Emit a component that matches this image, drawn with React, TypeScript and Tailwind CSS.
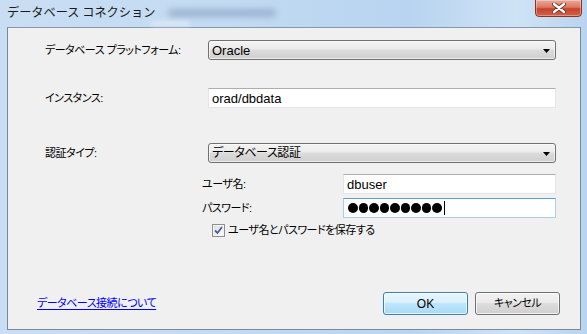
import React from "react";

const jp = "[font-family:'Liberation_Sans','Noto_Sans_CJK_JP',sans-serif] [font-feature-settings:'palt']";

function Combo({ children }: { children: React.ReactNode }) {
  return (
    <div className="relative flex h-[20px] w-[348px] items-center rounded-[3px] border border-[#707070] bg-[linear-gradient(180deg,#f3f3f3_0%,#ebebeb_45%,#dcdcdc_50%,#cfcfcf_100%)] pl-[3px] shadow-[inset_0_0_0_1px_rgba(255,255,255,0.6)]">
      {children}
      <svg className="absolute right-[5px] top-[8px]" width="7" height="4" viewBox="0 0 7 4">
        <path d="M0 0H7L3.5 4Z" fill="#000" />
      </svg>
    </div>
  );
}

function TextBox({ children, w, focused }: { children: React.ReactNode; w: string; focused?: boolean }) {
  return (
    <div
      className={
        "flex h-[20px] items-center bg-white pl-[3px] border " +
        w +
        (focused
          ? " border-[#a9cdef] border-t-[#5f9bd6]"
          : " border-[#e2e5ea] border-t-[#abadb3]")
      }
    >
      {children}
    </div>
  );
}

export default function App() {
  return (
    <div
      className={
        "relative flex h-[334px] w-[587px] flex-col overflow-hidden bg-[linear-gradient(90deg,#c9def3_0%,#c2daf2_40%,#b8d4f0_70%,#cfe3f6_88%,#b9d4ef_100%)] " +
        jp
      }
    >
      {/* title bar */}
      <div className="relative flex h-[27px] shrink-0 items-start">
        <span className="ml-[7px] mt-[4px] text-[12.2px] leading-[16px] text-[#1b1b1b] [font-feature-settings:normal] [font-family:'Noto_Sans_CJK_JP',sans-serif]">
          データベース コネクション
        </span>
        <div className="absolute left-[168px] top-[9px] h-[8px] w-[108px] rounded-full bg-[#6e86a6] opacity-45 blur-[3px]" />
        <div className="absolute left-[150px] top-[21px] h-[5px] w-[40px] rounded-full bg-[#e4eef8] opacity-70 blur-[2px]" />
        <div className="ml-auto mr-[5px] mt-[-1px] flex h-[18px] w-[47px] items-center justify-center rounded-b-[4px] border border-[#8a3224] bg-[linear-gradient(180deg,#eaa999_0%,#dc7863_45%,#c8432a_55%,#d0614a_100%)] shadow-[inset_0_0_0_1px_rgba(255,255,255,0.35)]">
          <svg width="14" height="10" viewBox="0 0 14 10">
            <path d="M2 1L12 9M12 1L2 9" stroke="#5a2a22" strokeWidth="4" strokeLinecap="round" />
            <path d="M2 1L12 9M12 1L2 9" stroke="#fff" strokeWidth="2.4" strokeLinecap="round" />
          </svg>
        </div>
      </div>

      {/* client area */}
      <div className="ml-[7px] mr-[6px] flex h-[303px] shrink-0 flex-col border border-[#7a8899] border-t-[#8796a8] bg-[#f0f0f0] pb-[14px] pl-[37px] pr-[24px] pt-[12px] text-[11px] font-normal tracking-[-0.5px] text-black">
        <div className="flex h-[20px] items-center">
          <span className="w-[163px]">データベース プラットフォーム:</span>
          <Combo>
            <span className="text-[13px] leading-none tracking-normal">Oracle</span>
          </Combo>
        </div>

        <div className="mt-[28px] flex h-[20px] items-center">
          <span className="w-[163px]">インスタンス:</span>
          <TextBox w="w-[348px]">
            <span className="text-[13px] leading-none tracking-normal">orad/dbdata</span>
          </TextBox>
        </div>

        <div className="mt-[35px] flex h-[20px] items-center">
          <span className="w-[163px]">認証タイプ:</span>
          <Combo>
            <span className="text-[12px] leading-none tracking-[-0.4px]">データベース認証</span>
          </Combo>
        </div>

        <div className="ml-[157px] mt-[11px] flex h-[20px] items-center">
          <span className="w-[141px]">ユーザ名:</span>
          <TextBox w="w-[213px]">
            <span className="text-[13px] leading-none tracking-normal">dbuser</span>
          </TextBox>
        </div>

        <div className="ml-[157px] mt-[4px] flex h-[20px] items-center">
          <span className="w-[141px]">パスワード:</span>
          <TextBox w="w-[213px]" focused>
            <div className="flex items-center gap-[1px] pl-[1px]">
              {Array.from({ length: 9 }).map((_, i) => (
                <span key={i} className="block h-[9.5px] w-[9.5px] rounded-full bg-black" />
              ))}
              <span className="ml-[1px] block h-[14px] w-[1px] bg-black" />
            </div>
          </TextBox>
        </div>

        <div className="ml-[167px] mt-[6px] flex h-[13px] items-center gap-[3px]">
          <span className="flex h-[13px] w-[13px] items-center justify-center border border-[#8f8f8f] bg-[linear-gradient(135deg,#dcdcdc,#ffffff)] shadow-[inset_0_0_0_1px_#f4f4f4]">
            <svg width="9" height="9" viewBox="0 0 9 9">
              <path d="M1 4.5L3.5 7L8 1" stroke="#4a5f97" strokeWidth="1.8" fill="none" />
            </svg>
          </span>
          <span className="leading-none">ユーザ名とパスワードを保存する</span>
        </div>

        <div className="-mr-[4px] ml-[-8px] mt-auto flex items-center">
          <a className="cursor-pointer text-[#0000ff] underline underline-offset-2">データベース接続について</a>
          <div className="ml-auto flex gap-[7px]">
            <button className="flex h-[23px] w-[85px] items-center justify-center rounded-[3px] border border-[#3c7fb1] bg-[linear-gradient(180deg,#eaf6fd_0%,#d9f0fc_45%,#bee6fd_50%,#a7d9f5_100%)] text-[12px] tracking-normal shadow-[inset_0_0_0_1px_rgba(255,255,255,0.7)]">
              OK
            </button>
            <button className="flex h-[23px] w-[85px] items-center justify-center rounded-[3px] border border-[#707070] bg-[linear-gradient(180deg,#f2f2f2_0%,#ebebeb_45%,#dddddd_50%,#cfcfcf_100%)] text-[11px] shadow-[inset_0_0_0_1px_rgba(255,255,255,0.7)]">
              キャンセル
            </button>
          </div>
        </div>
      </div>
    </div>
  );
}
